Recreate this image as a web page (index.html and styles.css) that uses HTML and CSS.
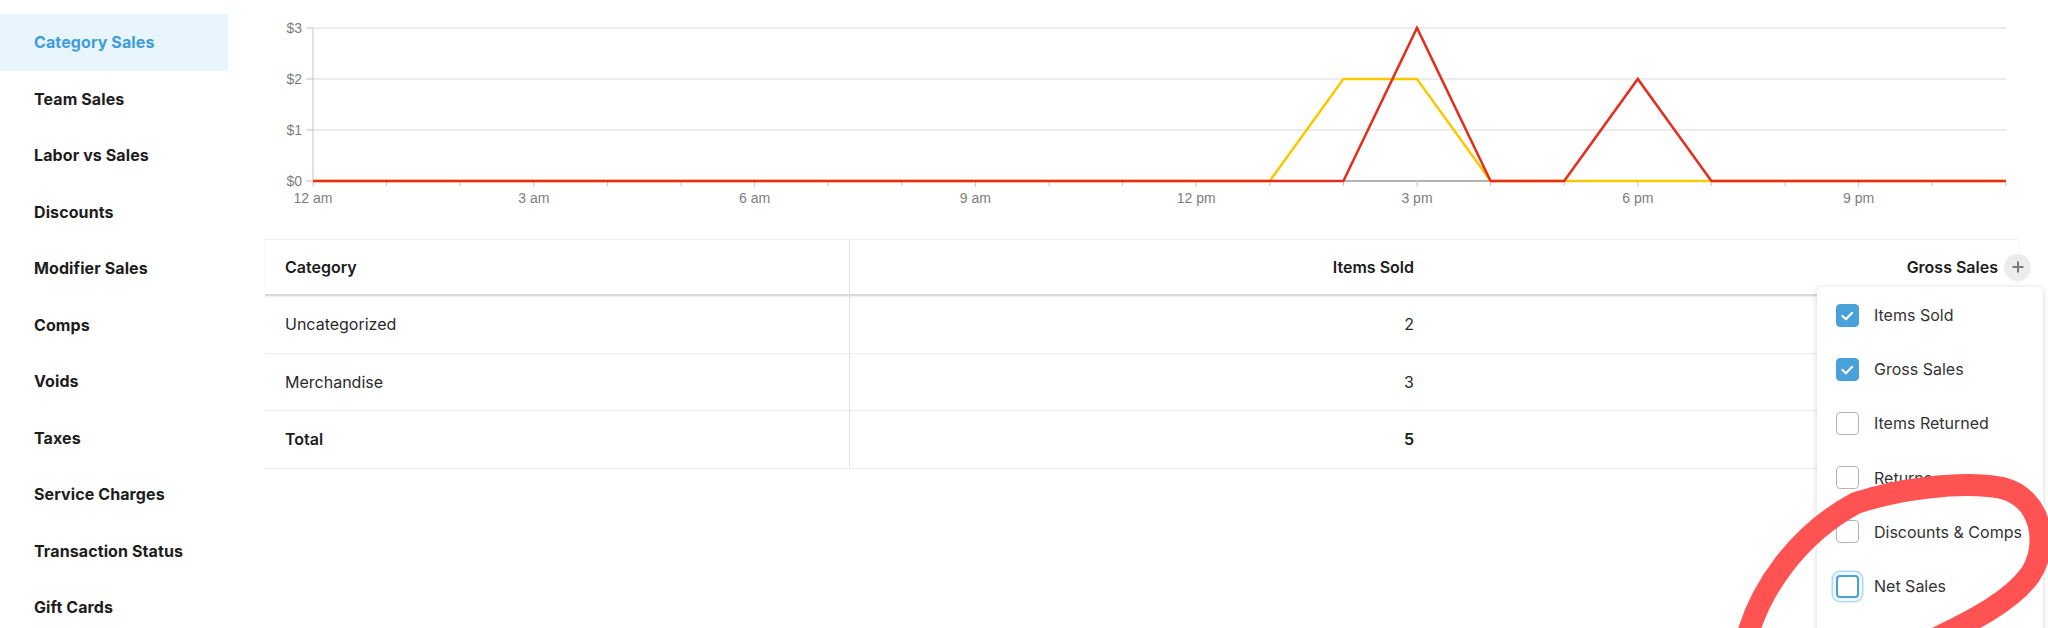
FILE: index.html
```html
<!DOCTYPE html>
<html lang="en">
<head>
<meta charset="utf-8">
<title>Category Sales</title>
<link rel="stylesheet" href="styles.css">
</head>
<body>
<ul class="sidebar">
  <li class="nav-item active">Category Sales</li>
  <li class="nav-item">Team Sales</li>
  <li class="nav-item">Labor vs Sales</li>
  <li class="nav-item">Discounts</li>
  <li class="nav-item">Modifier Sales</li>
  <li class="nav-item">Comps</li>
  <li class="nav-item">Voids</li>
  <li class="nav-item">Taxes</li>
  <li class="nav-item">Service Charges</li>
  <li class="nav-item">Transaction Status</li>
  <li class="nav-item">Gift Cards</li>
</ul>

<main class="main">
  <svg class="chart" viewBox="0 0 1753 239" xmlns="http://www.w3.org/2000/svg">
    <g class="grid">
      <line x1="48" y1="28" x2="1741" y2="28"/>
      <line x1="48" y1="79" x2="1741" y2="79"/>
      <line x1="48" y1="130" x2="1741" y2="130"/>
    </g>
    <g class="axis">
      <line x1="48" y1="28" x2="48" y2="181"/>
      <line x1="41" y1="28" x2="48" y2="28"/>
      <line x1="41" y1="79" x2="48" y2="79"/>
      <line x1="41" y1="130" x2="48" y2="130"/>
      <line x1="41" y1="181" x2="48" y2="181"/>
      <line x1="48" y1="181" x2="1741" y2="181" class="base"/>
      <line x1="48" y1="181" x2="48" y2="187"/>
      <line x1="121.6" y1="181" x2="121.6" y2="186"/>
      <line x1="195.2" y1="181" x2="195.2" y2="186"/>
      <line x1="268.8" y1="181" x2="268.8" y2="187"/>
      <line x1="342.4" y1="181" x2="342.4" y2="186"/>
      <line x1="416" y1="181" x2="416" y2="186"/>
      <line x1="489.6" y1="181" x2="489.6" y2="187"/>
      <line x1="563.2" y1="181" x2="563.2" y2="186"/>
      <line x1="636.8" y1="181" x2="636.8" y2="186"/>
      <line x1="710.4" y1="181" x2="710.4" y2="187"/>
      <line x1="784" y1="181" x2="784" y2="186"/>
      <line x1="857.6" y1="181" x2="857.6" y2="186"/>
      <line x1="931.2" y1="181" x2="931.2" y2="187"/>
      <line x1="1004.8" y1="181" x2="1004.8" y2="186"/>
      <line x1="1078.4" y1="181" x2="1078.4" y2="186"/>
      <line x1="1152" y1="181" x2="1152" y2="187"/>
      <line x1="1225.6" y1="181" x2="1225.6" y2="186"/>
      <line x1="1299.2" y1="181" x2="1299.2" y2="186"/>
      <line x1="1372.8" y1="181" x2="1372.8" y2="187"/>
      <line x1="1446.4" y1="181" x2="1446.4" y2="186"/>
      <line x1="1520" y1="181" x2="1520" y2="186"/>
      <line x1="1593.6" y1="181" x2="1593.6" y2="187"/>
      <line x1="1667.2" y1="181" x2="1667.2" y2="186"/>
      <line x1="1740.8" y1="181" x2="1740.8" y2="186"/>
    </g>
    <g class="ylabels">
      <text x="37" y="33">$3</text>
      <text x="37" y="84">$2</text>
      <text x="37" y="135">$1</text>
      <text x="37" y="186">$0</text>
    </g>
    <g class="xlabels">
      <text x="48" y="203">12 am</text>
      <text x="268.8" y="203">3 am</text>
      <text x="489.6" y="203">6 am</text>
      <text x="710.4" y="203">9 am</text>
      <text x="931.2" y="203">12 pm</text>
      <text x="1152" y="203">3 pm</text>
      <text x="1372.8" y="203">6 pm</text>
      <text x="1593.6" y="203">9 pm</text>
    </g>
    <polyline class="series-gross" points="48,181 1004.8,181 1078.4,79 1152,79 1225.6,181 1740.8,181"/>
    <polyline class="series-items" points="48,181 1078.4,181 1152,28 1225.6,181 1299.2,181 1372.8,79 1446.4,181 1740.8,181"/>
  </svg>

  <div class="table">
    <div class="row head">
      <div class="cell first">Category</div>
      <div class="cell num">Items Sold</div>
      <div class="cell num last">Gross Sales
        <span class="add-btn">
          <svg viewBox="0 0 16 16" width="16" height="16"><path d="M8 2.5v11M2.5 8h11"/></svg>
        </span>
      </div>
    </div>
    <div class="row body">
      <div class="cell first">Uncategorized</div>
      <div class="cell num">2</div>
      <div class="cell num"></div>
    </div>
    <div class="row body">
      <div class="cell first">Merchandise</div>
      <div class="cell num">3</div>
      <div class="cell num"></div>
    </div>
    <div class="row body total">
      <div class="cell first">Total</div>
      <div class="cell num">5</div>
      <div class="cell num"></div>
    </div>

    <div class="menu">
      <div class="menu-item"><span class="box checked"><svg viewBox="0 0 23 23"><path d="M6 12 L9.8 15.6 L16.6 8.6"/></svg></span>Items Sold</div>
      <div class="menu-item"><span class="box checked"><svg viewBox="0 0 23 23"><path d="M6 12 L9.8 15.6 L16.6 8.6"/></svg></span>Gross Sales</div>
      <div class="menu-item"><span class="box"></span>Items Returned</div>
      <div class="menu-item"><span class="box"></span>Returns</div>
      <div class="menu-item"><span class="box"></span>Discounts &amp; Comps</div>
      <div class="menu-item"><span class="box focus"></span>Net Sales</div>
      <div class="menu-item"><span class="box"></span></div>
    </div>
  </div>
</main>

<svg class="annotation" viewBox="0 0 2048 628" xmlns="http://www.w3.org/2000/svg">
  <path d="M1745 645 C1758 590, 1798 534, 1856 503 C1895 490, 1960 480, 2002 488 C2042 498, 2050 545, 2030 575 C2012 600, 1975 620, 1928 642"/>
</svg>
</body>
</html>
```

FILE: styles.css
```css
* { box-sizing: border-box; margin: 0; padding: 0; }

html, body {
  width: 2048px;
  height: 628px;
  overflow: hidden;
  background: #ffffff;
}

body {
  position: relative;
  display: flex;
  align-items: flex-start;
  font-family: Inter, "Liberation Sans", sans-serif;
  color: #222;
}

/* Sidebar */
.sidebar {
  width: 228px;
  flex: none;
  list-style: none;
  padding-top: 14px;
}

.nav-item {
  height: 56.5px;
  display: flex;
  align-items: center;
  padding-left: 34px;
  font-size: 16px;
  font-weight: 700;
  color: #1d1d1d;
  letter-spacing: 0.1px;
}

.nav-item.active {
  background: #e8f5fd;
  color: #3d9cdb;
}

/* Main */
.main {
  flex: 1;
  min-width: 0;
  padding: 0 30px 0 37px;
}

.chart {
  display: block;
  width: 1753px;
  height: 239px;
}

.chart .grid line {
  stroke: #e6e6e6;
  stroke-width: 1.5;
}

.chart .axis line {
  stroke: #cfcfcf;
  stroke-width: 1.2;
}

.chart .axis line.base {
  stroke: #b3b3b3;
  stroke-width: 2;
}

.chart text {
  font-family: "Liberation Sans", Arial, sans-serif;
  font-size: 14px;
  fill: #7d7d7d;
}

.chart .ylabels text { text-anchor: end; }
.chart .xlabels text { text-anchor: middle; }

.series-gross {
  fill: none;
  stroke: #fbc800;
  stroke-width: 2.5;
  stroke-linejoin: miter;
}

.series-items {
  fill: none;
  stroke: #e52d1d;
  stroke-width: 2.5;
  stroke-linejoin: miter;
}

/* Table */
.table {
  position: relative;
}

.row {
  display: grid;
  grid-template-columns: 585px 1fr 1fr;
  border-bottom: 1px solid #ececec;
}

.row.head {
  height: 57px;
  border-top: 1px solid #efefef;
  border-bottom: 2px solid #dadada;
  box-shadow: 0 1px 2px rgba(0, 0, 0, 0.08);
  font-weight: 600;
  color: #1c1c1c;
}

.row.body {
  height: 57.5px;
  color: #2a2a2a;
}

.row.total {
  font-weight: 600;
  color: #1c1c1c;
}

.cell {
  display: flex;
  align-items: center;
  padding: 0 20px;
  font-size: 16px;
}

.cell.first {
  border-right: 1px solid #e3e3e3;
}

.cell.num {
  justify-content: flex-end;
}

.cell.last {
  gap: 6px;
  padding-right: 0;
  margin-right: -13px;
}

.add-btn {
  width: 27px;
  height: 27px;
  border-radius: 50%;
  background: #ececec;
  display: flex;
  align-items: center;
  justify-content: center;
}

.add-btn path {
  stroke: #7a7a7a;
  stroke-width: 2;
  fill: none;
}

/* Column menu */
.menu {
  position: absolute;
  top: 48px;
  right: -25px;
  width: 226px;
  height: 420px;
  background: #ffffff;
  border-radius: 5px;
  box-shadow: 0 1px 6px rgba(0, 0, 0, 0.16);
  padding-top: 1px;
}

.menu-item {
  height: 54.2px;
  display: flex;
  align-items: center;
  padding-left: 19px;
  gap: 15px;
  font-size: 16px;
  color: #333;
  white-space: nowrap;
}

.box {
  width: 23px;
  height: 23px;
  flex: none;
  border: 1.5px solid #b4b4b4;
  border-radius: 4px;
  background: #fff;
  display: flex;
}

.box svg {
  width: 100%;
  height: 100%;
}

.box.checked {
  background: #4aa0d8;
  border-color: #4aa0d8;
}

.box.checked path {
  fill: none;
  stroke: #ffffff;
  stroke-width: 2.4;
  stroke-linecap: round;
  stroke-linejoin: round;
}

.box.focus {
  border: 2px solid #4a9fd6;
  box-shadow: 0 0 0 3px #eef7fd, 0 0 0 4.5px #b2d8f2;
}

/* Hand-drawn annotation */
.annotation {
  position: absolute;
  top: 0;
  left: 0;
  width: 2048px;
  height: 628px;
  pointer-events: none;
  z-index: 10;
}

.annotation path {
  fill: none;
  stroke: #ff5252;
  stroke-width: 22;
  stroke-linecap: round;
  stroke-linejoin: round;
}
```
